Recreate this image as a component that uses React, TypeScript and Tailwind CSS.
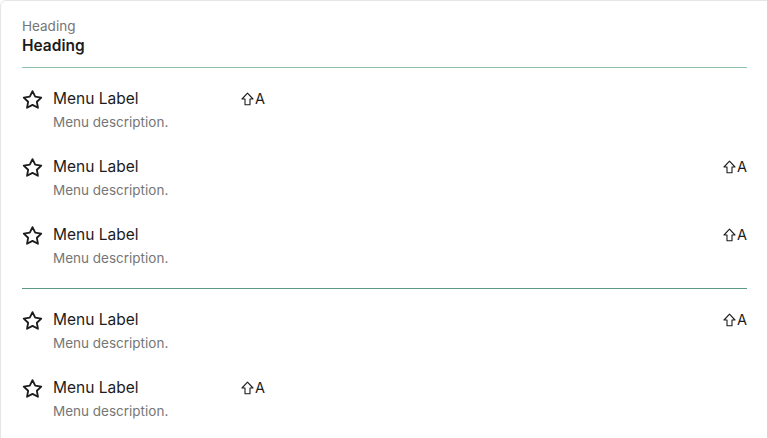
import React from 'react'

interface MenuItemProps {
  label: string
  description: string
  shortcutRight?: boolean
}

const StarIcon = () => (
  <svg
    width="21"
    height="21"
    viewBox="0 0 24 24"
    fill="none"
    stroke="currentColor"
    strokeWidth="2.1"
    strokeLinecap="round"
    strokeLinejoin="round"
    className="shrink-0 text-[#1c1c1c]"
  >
    <polygon points="12 2.5 15.1 8.8 22 9.8 17 14.6 18.2 21.5 12 18.2 5.8 21.5 7 14.6 2 9.8 8.9 8.8 12 2.5" />
  </svg>
)

const ShiftIcon = () => (
  <svg width="13" height="14" viewBox="0 0 13 14" fill="none" stroke="currentColor" strokeWidth="1.1" strokeLinejoin="round">
    <path d="M6.5 1.2 L12 7 H9 V12.8 H4 V7 H1 Z" />
  </svg>
)

const Shortcut = () => (
  <div className="flex items-center gap-[1px] text-[14.5px] leading-[22px] text-[#1c1c1c]">
    <ShiftIcon />
    <span>A</span>
  </div>
)

const MenuItem = ({ label, description, shortcutRight }: MenuItemProps) => {
  return (
    <li className="flex">
      <div className="flex h-[22px] items-center">
        <StarIcon />
      </div>
      <div className="ml-[10px] flex grow flex-col">
        <div className="flex items-center">
          <span className={`text-[15.5px] leading-[22px] text-[#1c1c1c] ${shortcutRight ? 'grow' : 'w-[188px]'}`}>{label}</span>
          <Shortcut />
        </div>
        <p className="mt-[2px] text-[13.5px] leading-[20px] text-[#767676]">{description}</p>
      </div>
    </li>
  )
}

const App = () => {
  return (
    <div className="h-[438px] w-[767px] overflow-hidden bg-white font-['Inter',sans-serif]">
      <div className="h-[460px] w-[790px] rounded-[6px] border border-[#e6e6e6] px-[21px] pt-[16px]">
        <div className="w-[725px]">
          <p className="text-[13.5px] leading-[18px] text-[#767676]">Heading</p>
          <h2 className="text-[15.5px] font-semibold leading-[22px] text-[#1c1c1c]">Heading</h2>
          <div className="mt-[10px] h-px bg-[#8fc2ab]" />
          <ul className="flex flex-col gap-[24px] py-[20px]">
            <MenuItem label="Menu Label" description="Menu description." />
            <MenuItem label="Menu Label" description="Menu description." shortcutRight />
            <MenuItem label="Menu Label" description="Menu description." shortcutRight />
          </ul>
          <div className="h-px bg-[#5c9a81]" />
          <ul className="flex flex-col gap-[24px] py-[20px]">
            <MenuItem label="Menu Label" description="Menu description." shortcutRight />
            <MenuItem label="Menu Label" description="Menu description." />
          </ul>
        </div>
      </div>
    </div>
  )
}

export default App
